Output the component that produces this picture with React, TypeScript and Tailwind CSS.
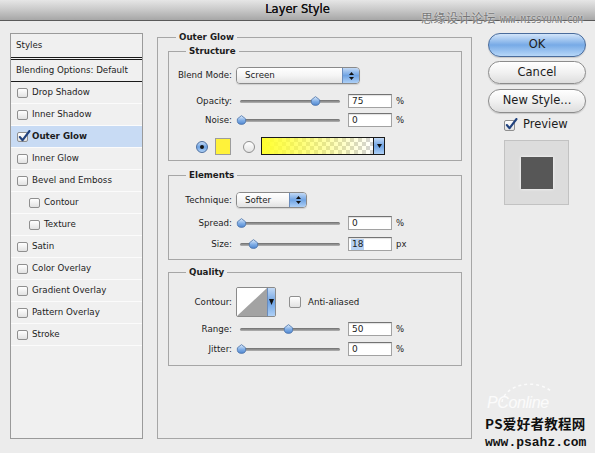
import React from 'react';

const styleItems = [
  { label: 'Drop Shadow' },
  { label: 'Inner Shadow' },
  { label: 'Outer Glow', on: true },
  { label: 'Inner Glow' },
  { label: 'Bevel and Emboss' },
  { label: 'Contour', indent: true },
  { label: 'Texture', indent: true },
  { label: 'Satin' },
  { label: 'Color Overlay' },
  { label: 'Gradient Overlay' },
  { label: 'Pattern Overlay' },
  { label: 'Stroke' },
];

function CheckBox({ on, className }: { on?: boolean; className: string }) {
  return (
    <div className={`relative shrink-0 rounded-[2px] border border-[#8f8f8f] bg-gradient-to-b from-[#ffffff] to-[#e2e2e2] ${className}`}>
      {on && (
        <svg className="absolute left-[0px] top-[-3px]" width="13" height="13" viewBox="0 0 13 13">
          <path d="M1.8 7 L4.6 10.2 L11.5 1" fill="none" stroke="#21427e" strokeWidth="2.1" strokeLinecap="round" strokeLinejoin="round" />
        </svg>
      )}
    </div>
  );
}

function Radio({ on }: { on?: boolean }) {
  return on ? (
    <div className="w-[12px] h-[12px] shrink-0 rounded-full border border-[#4c6e9f] bg-gradient-to-b from-[#c4dbf6] via-[#6ea3e3] to-[#b0d2f7] flex items-center justify-center">
      <div className="w-[4px] h-[4px] rounded-full bg-[#151515]" />
    </div>
  ) : (
    <div className="w-[12px] h-[12px] shrink-0 rounded-full border border-[#8e8e8e] bg-gradient-to-b from-[#ffffff] to-[#e4e4e4]" />
  );
}

function AquaArrows() {
  return (
    <div className="w-[17px] border-l border-[#6a8cbc] bg-gradient-to-b from-[#c2d9f5] via-[#6fa3e3] to-[#aed0f6] flex flex-col items-center justify-center gap-[2px]">
      <svg width="5" height="3" viewBox="0 0 5 3"><path d="M2.5 0 L5 3 L0 3Z" fill="#111" /></svg>
      <svg width="5" height="3" viewBox="0 0 5 3"><path d="M0 0 L5 0 L2.5 3Z" fill="#111" /></svg>
    </div>
  );
}

function Select({ value, className }: { value: string; className: string }) {
  return (
    <div className={`flex h-full rounded-[4px] border border-[#8a8a8a] overflow-hidden shadow-[0_1px_1px_rgba(0,0,0,0.12)] ${className}`}>
      <div className="flex-1 flex items-center pl-[8px] bg-gradient-to-b from-[#ffffff] via-[#f5f5f5] to-[#e2e2e2]">{value}</div>
      <AquaArrows />
    </div>
  );
}

function Thumb() {
  return (
    <svg width="11" height="10" viewBox="0 0 11 10">
      <defs>
        <linearGradient id="thumbg" x1="0" y1="0" x2="0" y2="1">
          <stop offset="0" stopColor="#e1edfb" />
          <stop offset="0.55" stopColor="#7fade6" />
          <stop offset="1" stopColor="#4f86cf" />
        </linearGradient>
      </defs>
      <path d="M5.5 0.6 L9.6 3.8 Q10.6 9.4 5.5 9.4 Q0.4 9.4 1.4 3.8 Z" fill="url(#thumbg)" stroke="#4a72a8" strokeWidth="0.8" />
    </svg>
  );
}

function Slider({ pos }: { pos: number }) {
  return (
    <div className="relative w-[108px] h-full flex items-center">
      <div className="mx-[4px] flex-1 h-[3px] rounded-full bg-gradient-to-b from-[#6e6e6e] to-[#b4b4b4]" />
      <div className="absolute top-[2px]" style={{ left: pos - 1.5 }}>
        <Thumb />
      </div>
    </div>
  );
}

function Field({ v, sel }: { v: string; sel?: boolean }) {
  return (
    <div className="ml-[4px] w-[44px] h-full bg-white border border-[#a2a2a2] border-t-[#737373] shadow-[inset_0_1px_1px_rgba(0,0,0,0.12)] flex items-center pl-[2px] text-[9px]">
      {sel ? <span className="bg-[#b7d2f3] px-[1px] py-[1px]">{v}</span> : <span className="px-[1px]">{v}</span>}
    </div>
  );
}

function SliderRow({ label, pos, v, unit, sel, className }: { label: string; pos: number; v: string; unit: string; sel?: boolean; className: string }) {
  return (
    <div className={`flex items-center h-[14px] ${className}`}>
      <div className="w-[63px] text-right">{label}</div>
      <div className="ml-[4px] h-full">
        <Slider pos={pos} />
      </div>
      <Field v={v} sel={sel} />
      <span className="ml-[4px] text-[8.5px]">{unit}</span>
    </div>
  );
}

function Group({ title, className, children }: { title: string; className: string; children?: React.ReactNode }) {
  return (
    <div className={`border border-[#a6a6a6] ${className}`}>
      <div className="-mt-[6px] ml-[17px] w-fit h-[11px] px-[3px] bg-[#ececec] font-bold flex items-center">{title}</div>
      {children}
    </div>
  );
}

function GradientSwatch() {
  return (
    <div className="ml-[6px] flex h-[18px] w-[124px] border border-[#1a1a1a] -mt-[1px]">
      <svg width="111" height="16" viewBox="0 0 111 16">
        <defs>
          <pattern id="chk" width="8" height="8" patternUnits="userSpaceOnUse">
            <rect width="8" height="8" fill="#ffffff" />
            <rect width="4" height="4" fill="#d4d4d4" />
            <rect x="4" y="4" width="4" height="4" fill="#d4d4d4" />
          </pattern>
          <linearGradient id="yl" x1="0" y1="0" x2="1" y2="0">
            <stop offset="0" stopColor="#ffff2e" stopOpacity="1" />
            <stop offset="1" stopColor="#ffff2e" stopOpacity="0" />
          </linearGradient>
        </defs>
        <rect width="111" height="16" fill="url(#chk)" />
        <rect width="111" height="16" fill="url(#yl)" />
      </svg>
      <div className="flex-1 border-l border-[#1a1a1a] bg-gradient-to-b from-[#c2d9f5] via-[#6fa3e3] to-[#aed0f6] flex items-center justify-center">
        <svg width="5" height="4" viewBox="0 0 5 4"><path d="M0 0 L5 0 L2.5 4Z" fill="#111" /></svg>
      </div>
    </div>
  );
}

function ContourPicker() {
  return (
    <div className="ml-[4px] flex w-[40px] h-full border border-[#8a8a8a] rounded-[2px] overflow-hidden">
      <svg width="30" height="28" viewBox="0 0 30 28">
        <rect width="30" height="28" fill="#ffffff" />
        <path d="M0 28 L30 0 L30 28 Z" fill="#a3a3a3" />
      </svg>
      <div className="flex-1 border-l border-[#6a8cbc] bg-gradient-to-b from-[#c2d9f5] via-[#6fa3e3] to-[#aed0f6] flex items-center justify-center">
        <svg width="5" height="6" viewBox="0 0 5 6"><path d="M0 0 L5 0 L2.5 6Z" fill="#111" /></svg>
      </div>
    </div>
  );
}

function PillButton({ label, primary, className }: { label: string; primary?: boolean; className: string }) {
  return (
    <div
      className={`w-[98px] rounded-full border flex items-center justify-center text-[11.5px] shadow-[0_1px_1px_rgba(0,0,0,0.15)] ${
        primary
          ? 'border-[#4a6c9c] bg-gradient-to-b from-[#d3e5f9] via-[#77aae6] to-[#b7d7f8]'
          : 'border-[#8c8c8c] bg-gradient-to-b from-[#ffffff] via-[#f1f1f1] to-[#dedede]'
      } ${className}`}
    >
      {label}
    </div>
  );
}

export default function App() {
  return (
    <div className="relative w-[595px] h-[453px] overflow-hidden bg-[#ececec] text-[#1c1c1c] font-['DejaVu_Sans',sans-serif] text-[8.7px] leading-none">
      {/* Title bar */}
      <div className="h-[21px] border-b border-[#5a5a5a] bg-gradient-to-b from-[#e6e6e6] via-[#c8c8c8] to-[#a7a7a7] flex items-center justify-center">
        <span className="text-[11.5px] text-[#111] [text-shadow:0_0_0.2px_#111]">Layer Style</span>
      </div>

      <div className="flex items-start pt-[12px]">
        {/* Styles list */}
        <div className="ml-[10px] w-[133px] h-[406px] border border-[#9a9a9a] bg-[#f0f0f0] flex flex-col">
          <div className="h-[26px] border-b-[3px] border-double border-[#1a1a1a] flex items-center pl-[5px]">Styles</div>
          <div className="h-[22px] border-b border-[#1a1a1a] flex items-center pl-[5px]">Blending Options: Default</div>
          {styleItems.map((s) => (
            <div
              key={s.label}
              className={`h-[22px] border-b border-[#fbfbfb] flex items-center ${s.indent ? 'pl-[18px]' : 'pl-[6px]'} ${s.on ? 'bg-[#c8dbf4] font-bold' : ''}`}
            >
              <CheckBox on={s.on} className="w-[11px] h-[10px]" />
              <span className="ml-[4px]">{s.label}</span>
            </div>
          ))}
        </div>

        {/* Outer Glow panel */}
        <div className="ml-[14px] mt-[4px] w-[315px] h-[402px] border border-[#a6a6a6]">
          <div className="-mt-[6px] ml-[18px] w-fit h-[11px] px-[3px] bg-[#ececec] font-bold flex items-center">Outer Glow</div>

          <Group title="Structure" className="mt-[8px] ml-[10px] mr-[9px] pb-[5px]">
            <div className="flex items-center h-[17px] mt-[10px]">
              <div className="w-[63px] text-right">Blend Mode:</div>
              <div className="ml-[4px] h-full">
                <Select value="Screen" className="w-[124px]" />
              </div>
            </div>
            <SliderRow label="Opacity:" pos={75} v="75" unit="%" className="mt-[10px]" />
            <SliderRow label="Noise:" pos={1} v="0" unit="%" className="mt-[5px]" />
            <div className="flex items-center h-[17px] mt-[11px] pl-[27px]">
              <Radio on />
              <div className="ml-[7px] w-[16px] h-[17px] border border-[#9c9c9c] bg-[#fff23a]" />
              <div className="ml-[12px]">
                <Radio />
              </div>
              <GradientSwatch />
            </div>
          </Group>

          <Group title="Elements" className="mt-[14px] ml-[10px] mr-[9px] pb-[8px]">
            <div className="flex items-center h-[16px] mt-[11px]">
              <div className="w-[63px] text-right">Technique:</div>
              <div className="ml-[4px] h-full">
                <Select value="Softer" className="w-[71px]" />
              </div>
            </div>
            <SliderRow label="Spread:" pos={1} v="0" unit="%" className="mt-[8px]" />
            <SliderRow label="Size:" pos={13} v="18" unit="px" sel className="mt-[7px]" />
          </Group>

          <Group title="Quality" className="mt-[12px] ml-[10px] mr-[9px] pb-[9px]">
            <div className="flex items-center h-[30px] mt-[9px]">
              <div className="w-[63px] text-right">Contour:</div>
              <ContourPicker />
              <CheckBox className="ml-[13px] w-[12px] h-[12px]" />
              <span className="ml-[7px]">Anti-aliased</span>
            </div>
            <SliderRow label="Range:" pos={48} v="50" unit="%" className="mt-[5px]" />
            <SliderRow label="Jitter:" pos={1} v="0" unit="%" className="mt-[6px]" />
          </Group>
        </div>

        {/* Buttons */}
        <div className="ml-[16px] flex flex-col">
          <PillButton label="OK" primary className="h-[24px]" />
          <PillButton label="Cancel" className="h-[23px] mt-[4px]" />
          <PillButton label="New Style..." className="h-[24px] mt-[5px]" />
          <div className="mt-[6px] ml-[16px] h-[12px] flex items-center">
            <CheckBox on className="w-[11px] h-[11px]" />
            <span className="ml-[8px] text-[11.5px]">Preview</span>
          </div>
          <div className="mt-[9px] ml-[16px] w-[65px] h-[65px] bg-[#dcdcdc] border border-[#c2c2c2] flex items-center justify-center">
            <div className="w-[32px] h-[32px] bg-[#575757] shadow-[0_0_3px_rgba(255,255,255,0.9)]" />
          </div>
        </div>
      </div>

      {/* watermark top right */}
      <div className="absolute left-[421px] top-[11px] h-[14px] flex items-center gap-[4px] text-[#777777] [text-shadow:0_0_2px_#ffffff]">
        <span className="text-[12px] font-['Noto_Sans_CJK_SC',sans-serif] leading-[14px] tracking-[0.5px]">思缘设计论坛</span>
        <span className="text-[8.6px] font-['DejaVu_Sans_Mono',monospace] leading-[10px] mt-[3px]">WWW.MISSYUAN.COM</span>
      </div>

      {/* watermark bottom right */}
      <svg className="absolute left-[480px] top-[380px]" width="90" height="30" viewBox="0 0 90 30">
        <path d="M22 22 A28 20 0 0 1 72 12" fill="none" stroke="#ffffff" strokeOpacity="0.8" strokeWidth="1.5" strokeDasharray="3 3" />
      </svg>
      <div className="absolute left-[487px] top-[395px] h-[16px] text-[16px] italic font-['Liberation_Sans',sans-serif] text-white/80 tracking-tight leading-[16px]">
        PConline
      </div>
      <div className="absolute left-[485px] top-[416px] h-[14px] text-[13.5px] font-bold text-[#111] font-['Noto_Sans_CJK_SC',sans-serif] leading-[14px] tracking-[0.3px]">
        PS爱好者教程网
      </div>
      <div className="absolute left-[485px] top-[436px] h-[13px] text-[13px] font-bold text-[#111] font-['Liberation_Mono',monospace] leading-[13px]">
        www.psahz.com
      </div>
    </div>
  );
}
